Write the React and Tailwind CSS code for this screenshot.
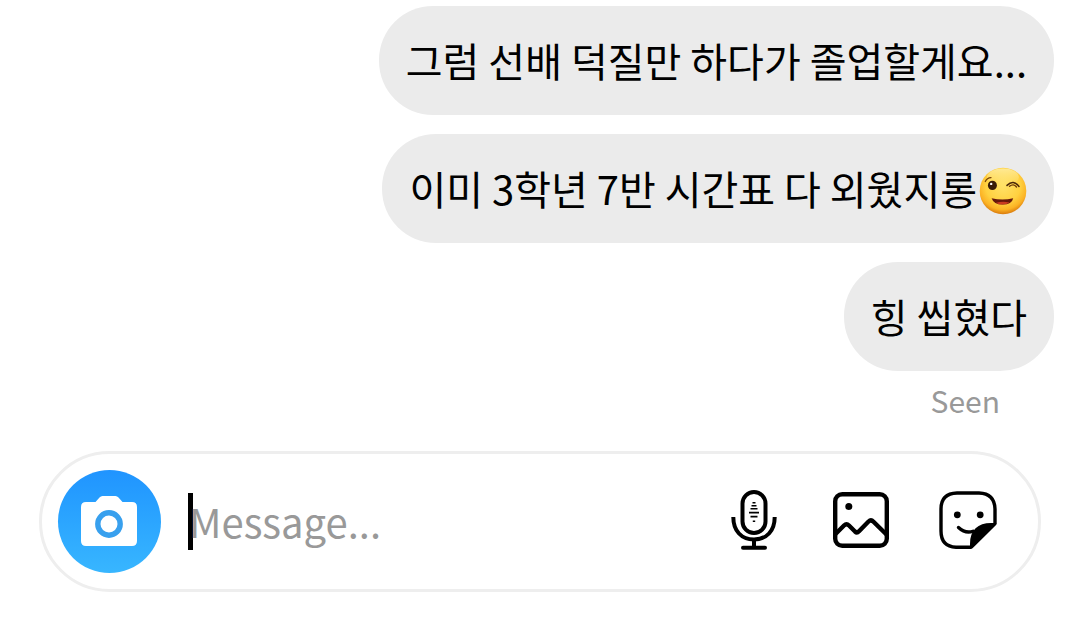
import { useState } from "react";

const messages = [
  { id: 1, text: "그럼 선배 덕질만 하다가 졸업할게요..." },
  { id: 2, text: "이미 3학년 7반 시간표 다 외웠지롱", wink: true },
  { id: 3, text: "힝 씹혔다" },
];

function WinkEmoji() {
  return (
    <svg viewBox="0 0 48 48" className="w-12 h-12 shrink-0 ml-0.5 mt-1" role="img" aria-label="😉">
      <defs>
        <radialGradient id="face" cx="0.5" cy="0.38" r="0.62">
          <stop offset="0" stopColor="#ffe268" />
          <stop offset="0.6" stopColor="#ffd140" />
          <stop offset="0.84" stopColor="#fbb224" />
          <stop offset="1" stopColor="#d97a0c" />
        </radialGradient>
        <linearGradient id="shine" x1="0" y1="0" x2="0" y2="1">
          <stop offset="0" stopColor="#fff4b8" stopOpacity="0.7" />
          <stop offset="1" stopColor="#fff0a0" stopOpacity="0" />
        </linearGradient>
      </defs>
      <circle cx="24" cy="24" r="23.3" fill="url(#face)" />
      <ellipse cx="24" cy="10" rx="16" ry="8.5" fill="url(#shine)" />
      <ellipse cx="13.4" cy="18.4" rx="4.5" ry="4.7" fill="#3a1d08" />
      <circle cx="12.2" cy="16.9" r="1.2" fill="#fff" />
      <path d="M6.3 14.5Q8 10.8 12 10.6" fill="none" stroke="#7a4308" strokeWidth="1.3" strokeLinecap="round" />
      <path d="M28 18.4Q34.5 12 40 19.5" fill="none" stroke="#4a260a" strokeWidth="1.5" strokeLinecap="round" />
      <path d="M30.5 19.3Q34.5 16 37.5 20" fill="none" stroke="#6a380a" strokeWidth="1.3" strokeLinecap="round" />
      <path d="M12.6 31.2Q23.5 34 34.2 31.2Q33 37.4 23.6 37.6Q14.6 37.4 12.6 31.2Z" fill="#65170b" />
      <path d="M17 35.7Q23.6 33.8 30.5 35.4Q28 37.5 23.6 37.6Q19.5 37.5 17 35.7Z" fill="#c93b20" />
    </svg>
  );
}

function CameraIcon() {
  return (
    <svg viewBox="0 0 56 50" className="w-14 h-[50px]" aria-hidden="true">
      <path
        fill="#fff"
        d="M5 6H14.5L18.5 1.5Q19.8 0 21.5 0H34.5Q36.2 0 37.5 1.5L41.5 6H51Q56 6 56 11V45Q56 50 51 50H5Q0 50 0 45V11Q0 6 5 6Z"
      />
      <circle cx="28" cy="28" r="11.2" fill="#fff" stroke="#38a0ee" strokeWidth="5.4" />
    </svg>
  );
}

function MicIcon() {
  return (
    <svg viewBox="0 0 46 60" className="w-[46px] h-[60px]" fill="none" stroke="#000" aria-hidden="true">
      <rect x="11.5" y="2" width="23" height="41" rx="11.5" strokeWidth="4" />
      <path d="M2.3 27C2.3 41 10.5 49.5 23 49.5S43.7 41 43.7 27" strokeWidth="4" />
      <path d="M23 49V57" strokeWidth="4" />
      <path d="M12 57.8H34" strokeWidth="4" strokeLinecap="round" />
      <path d="M21.5 12.8H24.5M20.5 15.8H25.5M19.5 18.8H26.5M18 22.6H28M19.5 26.6H26.5M21.8 31.2H24.2" strokeWidth="1.6" />
    </svg>
  );
}

function ImageIcon() {
  return (
    <svg viewBox="0 0 56 56" className="w-14 h-14" fill="none" stroke="#000" strokeWidth="4.4" aria-hidden="true">
      <rect x="2.2" y="2.2" width="51.6" height="51.6" rx="7" />
      <path d="M2 42.5L11 33.5Q13.5 31 16 33.5L22 39.5Q24 41.3 26 39.2L35.5 29.5Q38 27.2 40.5 29.7L54 43" />
      <circle cx="15.8" cy="14.5" r="3.5" fill="#000" stroke="none" />
    </svg>
  );
}

function StickerIcon() {
  return (
    <svg viewBox="0 0 58 58" className="w-[58px] h-[58px]" fill="none" stroke="#000" strokeWidth="3.4" aria-hidden="true">
      <path d="M32 56.2H17Q2 55.5 2 40V18Q2 2.5 18 2H40Q55.5 2.5 56 18V32.5L32 56.2Z" strokeLinejoin="round" />
      <path d="M31 57V53C31 39 39 32 52 32H57.3Q57.3 33.5 56 34.8L34.5 56Q33.3 57.2 31 57Z" fill="#000" stroke="none" />
      <circle cx="18.3" cy="23.8" r="3.4" fill="#000" stroke="none" />
      <circle cx="41.2" cy="23.8" r="3.4" fill="#000" stroke="none" />
      <path d="M19.5 36.5Q26 42.7 34 40.3" strokeLinecap="round" />
    </svg>
  );
}

function App() {
  const [draft, setDraft] = useState("");

  return (
    <main className="bg-white text-black font-['Noto_Sans_CJK_KR',sans-serif]">
      {/* Messages */}
      <ul className="flex flex-col items-end gap-[19px] pt-1.5 px-[26px]">
        {messages.map((message) => (
          <li
            key={message.id}
            className="flex items-center h-[109px] px-[27px] rounded-[54px] bg-[#ebebeb] text-[40px] leading-[60px] whitespace-nowrap"
          >
            <span className="pb-0.5">{message.text}</span>
            {message.wink && <WinkEmoji />}
          </li>
        ))}
      </ul>
      <p className="mt-2 pr-20 text-right text-[30px] leading-[42px] text-[#999999]">Seen</p>

      {/* Composer */}
      <form
        onSubmit={(e) => e.preventDefault()}
        className="flex items-center h-[141px] mx-[39px] mt-[30px] pl-4 pr-[41px] rounded-full border-3 border-[#eeeeee]"
      >
        <button
          type="button"
          aria-label="Camera"
          className="flex items-center justify-center w-[103px] h-[103px] pb-0.5 pr-0.5 shrink-0 rounded-full bg-linear-to-b from-[#2094ff] to-[#38b6ff]"
        >
          <CameraIcon />
        </button>
        <div className="relative flex-1 min-w-0 ml-[27px]">
          {draft === "" && <span className="absolute left-0 top-0 w-[5px] h-[57px] bg-black" />}
          <input
            type="text"
            aria-label="Message"
            placeholder="Message..."
            value={draft}
            onChange={(e) => setDraft(e.target.value)}
            className="relative block w-full h-[57px] pb-0.5 pl-px text-[40px] bg-transparent outline-none placeholder:text-[#999999]"
          />
        </div>
        <div className="flex items-center gap-[49px] pb-1 shrink-0">
          <button type="button" aria-label="Voice message" className="flex justify-center w-[58px]">
            <MicIcon />
          </button>
          <button type="button" aria-label="Photo" className="flex justify-center w-[58px]">
            <ImageIcon />
          </button>
          <button type="button" aria-label="Sticker" className="flex justify-center w-[58px]">
            <StickerIcon />
          </button>
        </div>
      </form>
    </main>
  );
}

export default App;
